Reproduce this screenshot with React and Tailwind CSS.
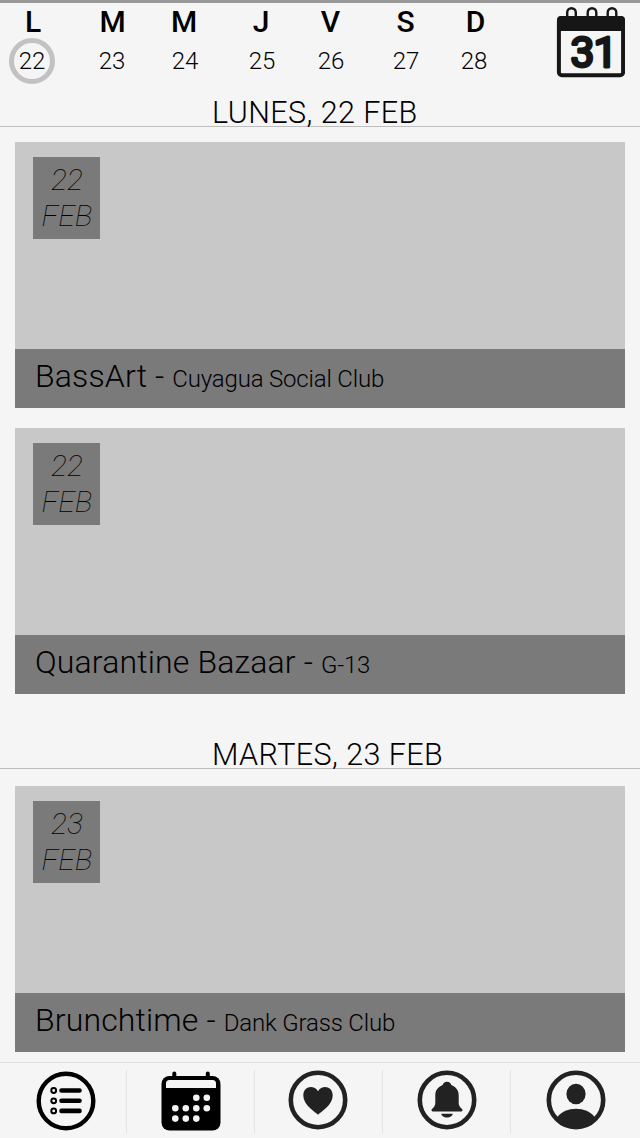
import React from "react";

const days = [
  { letter: "L", date: "22", gap: "ml-[9px]", nudge: "pl-[2px]", active: true },
  { letter: "M", date: "23", gap: "ml-[34px]", nudge: "pl-[1px]" },
  { letter: "M", date: "24", gap: "ml-[27px]", nudge: "pr-[2px]" },
  { letter: "J", date: "25", gap: "ml-[31px]", nudge: "pr-[2px]" },
  { letter: "V", date: "26", gap: "ml-[23px]", nudge: "pr-[1px]" },
  { letter: "S", date: "27", gap: "ml-[29px]", nudge: "pr-[1px]" },
  { letter: "D", date: "28", gap: "ml-[22px]", nudge: "pl-[3px]" },
];

function Day({ day }) {
  return (
    <div className={"flex w-[46px] shrink-0 flex-col items-center " + day.gap}>
      <span className={"h-[30px] text-[30px] font-medium leading-[30px] " + day.nudge}>{day.letter}</span>
      <span
        className={
          "mt-px flex h-[46px] w-[46px] items-center justify-center rounded-full text-[24px] font-light leading-[24px] " +
          (day.active ? "border-[5px] border-[#c2c2c2]" : "")
        }
      >
        {day.date}
      </span>
    </div>
  );
}

function MonthIcon() {
  return (
    <svg width="70" height="76" viewBox="0 0 70 76" className="ml-[81px] mt-[3px] shrink-0">
      <rect x="3.900" y="12" width="64.200" height="57.200" rx="3" fill="none" stroke="#161616" strokeWidth="4" />
      <path d="M2 25V14q0-4 4-4h60q4 0 4 4v11z" fill="#161616" />
      <g fill="none" stroke="#161616" strokeWidth="2.4">
        <path d="M12.2 12V6.5a4.3 4.3 0 0 1 8.6 0V12" />
        <path d="M32.7 12V6.5a4.3 4.3 0 0 1 8.6 0V12" />
        <path d="M52.7 12V6.5a4.3 4.3 0 0 1 8.6 0V12" />
      </g>
      <text
        x="15.500"
        y="60.800"
        fill="#161616"
        stroke="#161616"
        strokeWidth="3"
        strokeLinejoin="round"
        fontFamily="Roboto, sans-serif"
        fontWeight="400"
        fontSize="42.500"
        letterSpacing="-1"
      >
        31
      </text>
    </svg>
  );
}

function DayHeading({ children }) {
  return (
    <h2 className="h-[33px] border-b border-[#bdbdbd] pl-[212px] text-[30.5px] font-light leading-[37px] tracking-[0.42px] whitespace-nowrap">
      {children}
    </h2>
  );
}

function EventCard({ day, title, place }) {
  return (
    <article className="mx-[15px] flex h-[266px] shrink-0 flex-col justify-between bg-[#c8c8c8]">
      <div className="ml-[18px] mt-[15px] flex h-[82px] w-[67px] flex-col items-center bg-[#7a7a7a] pl-px pt-[5px] text-[30px] font-thin italic leading-[36px]">
        <span>{day}</span>
        <span>FEB</span>
      </div>
      <div className="h-[59px] bg-[#7a7a7a] pl-[20px] text-[32px] font-light leading-[54px] tracking-[0.15px] whitespace-nowrap">
        {title} - <span className="text-[24px] tracking-[-0.18px]">{place}</span>
      </div>
    </article>
  );
}

function ListIcon() {
  return (
    <svg width="60" height="60" viewBox="0 0 60 60">
      <circle cx="30" cy="30" r="27.3" fill="none" stroke="#000" strokeWidth="4.4" />
      <g fill="none" stroke="#000" strokeWidth="2">
        <circle cx="17.7" cy="19.5" r="2.4" />
        <circle cx="17.7" cy="29.8" r="2.4" />
        <circle cx="17.7" cy="39.9" r="2.4" />
      </g>
      <path d="M25.5 19.5h18M25.5 29.8h18M25.5 39.9h18" stroke="#000" strokeWidth="4.6" strokeLinecap="round" />
    </svg>
  );
}

const dots = [
  [35.3, 26.8], [45.8, 26.8],
  [14.3, 37.2], [24.8, 37.2], [35.3, 37.2], [45.8, 37.2],
  [14.3, 47.6], [24.8, 47.6], [35.3, 47.6],
];

function CalendarIcon() {
  return (
    <svg width="60" height="60" viewBox="0 0 60 60">
      <rect x="0.5" y="5" width="59" height="54.5" rx="8" fill="#000" />
      <path d="M13.3 8V2.5M46.8 8V2.5" stroke="#000" strokeWidth="4" strokeLinecap="round" />
      <path d="M5 17v-4.5q0-3.500 3.500-3.500h43q3.500 0 3.500 3.500v4.500z" fill="#f5f5f5" />
      {dots.map(([x, y]) => (
        <circle key={x + "-" + y} cx={x} cy={y} r="3.3" fill="#f5f5f5" />
      ))}
    </svg>
  );
}

function Ring({ children }) {
  return (
    <svg width="60" height="60" viewBox="0 0 60 60">
      <circle cx="30" cy="30" r="27.2" fill="none" stroke="#222" strokeWidth="4.6" />
      {children}
    </svg>
  );
}

function HeartIcon() {
  return (
    <Ring>
      <path d="M30 44.800C27.500 42 15.300 35.500 15.300 25.500C15.300 16 26 14.500 30 21.300C34 14.500 44.700 16 44.700 25.500C44.700 35.500 32.500 42 30 44.800Z" fill="#222" />
    </Ring>
  );
}

function BellIcon() {
  return (
    <Ring>
      <path d="M30 11.800c-2.600 0-3.800 1.500-4.300 3.200c-4.600 1.700-7.400 5.500-7.400 10.200v7.500c0 2.600-1 4.200-3.100 6c-1.300 1.100-.9 2.800.9 2.800h27.800c1.800 0 2.200-1.700.9-2.800c-2.100-1.800-3.100-3.400-3.100-6v-7.500c0-4.700-2.800-8.500-7.400-10.200c-.5-1.700-1.700-3.200-4.300-3.200z" fill="#222" />
      <path d="M24.300 43.800h11.400c-.5 5-10.900 5-11.400 0z" fill="#222" />
    </Ring>
  );
}

function UserIcon() {
  return (
    <Ring>
      <ellipse cx="30" cy="24" rx="9.600" ry="10.300" fill="#222" />
      <path d="M11.500 47C19 36 41 36 48.500 47C39 62 21 62 11.500 47Z" fill="#222" />
    </Ring>
  );
}

function Tab({ label, divider, offset, children }) {
  return (
    <button
      aria-label={label}
      className={"flex h-[63px] shrink-0 items-start " + offset + (divider ? " border-r border-[#e4e4e4]" : "")}
    >
      {children}
    </button>
  );
}

export default function App() {
  return (
    <div className="flex h-[1138px] w-[640px] flex-col overflow-hidden bg-[#f5f5f5] font-['Roboto',sans-serif] text-black">
      <header className="flex h-[94px] shrink-0 items-start border-t-[3px] border-[#999]">
        <div className="flex pt-[4px]">
          {days.map((day) => (
            <Day key={day.date} day={day} />
          ))}
        </div>
        <div className="-ml-[23px]">
          <MonthIcon />
        </div>
      </header>
      <main className="flex h-[968px] shrink-0 flex-col">
        <DayHeading>LUNES, 22 FEB</DayHeading>
        <div className="mt-[15px] flex flex-col gap-5">
          <EventCard day="22" title="BassArt" place="Cuyagua Social Club" />
          <EventCard day="22" title="Quarantine Bazaar" place="G-13" />
        </div>
        <div className="mt-[42px]">
          <DayHeading>MARTES, 23 FEB</DayHeading>
        </div>
        <div className="mt-[17px] flex flex-col">
          <EventCard day="23" title="Brunchtime" place="Dank Grass Club" />
        </div>
      </main>
      <nav className="flex h-[76px] shrink-0 items-start border-t border-[#dedede] pt-[7px]">
        <Tab label="Lista" offset="w-[127px] pl-[36px] pt-px" divider><ListIcon /></Tab>
        <Tab label="Calendario" offset="w-[128px] pl-[34px] pt-px" divider><CalendarIcon /></Tab>
        <Tab label="Favoritos" offset="w-[128px] pl-[33px]" divider><HeartIcon /></Tab>
        <Tab label="Notificaciones" offset="w-[128px] pl-[34px]" divider><BellIcon /></Tab>
        <Tab label="Perfil" offset="w-[128px] pl-[35px]"><UserIcon /></Tab>
      </nav>
    </div>
  );
}
